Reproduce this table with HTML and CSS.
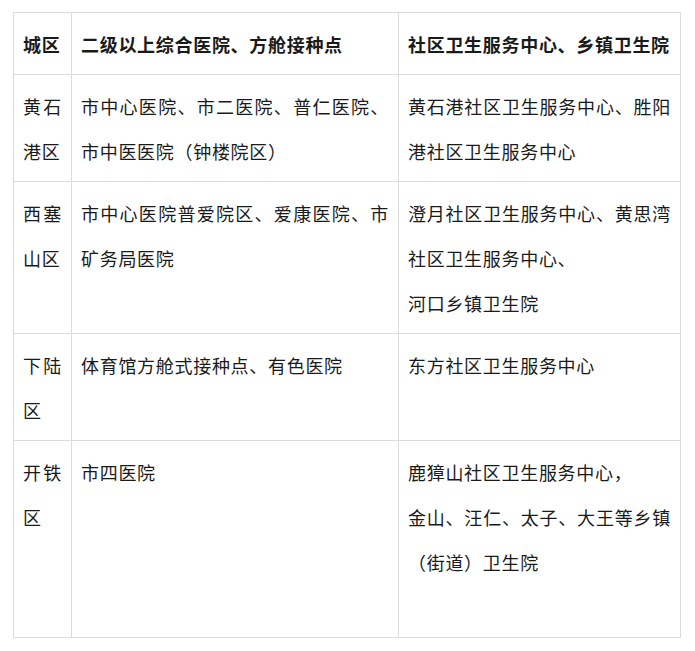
FILE: index.html
```html
<!DOCTYPE html>
<html lang="zh-CN">
<head>
<meta charset="utf-8">
<link rel="stylesheet" href="styles.css">
</head>
<body>
<table class="sites">
  <colgroup>
    <col class="c1">
    <col class="c2">
    <col class="c3">
  </colgroup>
  <tr class="head">
    <th>城区</th>
    <th>二级以上综合医院、方舱接种点</th>
    <th>社区卫生服务中心、乡镇卫生院</th>
  </tr>
  <tr>
    <td>黄石港区</td>
    <td>市中心医院、市二医院、普仁医院、市中医医院（钟楼院区）</td>
    <td>黄石港社区卫生服务中心、胜阳港社区卫生服务中心</td>
  </tr>
  <tr>
    <td>西塞山区</td>
    <td>市中心医院普爱院区、爱康医院、市矿务局医院</td>
    <td>澄月社区卫生服务中心、黄思湾社区卫生服务中心、<br>河口乡镇卫生院</td>
  </tr>
  <tr>
    <td>下陆区</td>
    <td>体育馆方舱式接种点、有色医院</td>
    <td>东方社区卫生服务中心</td>
  </tr>
  <tr>
    <td>开铁区</td>
    <td>市四医院</td>
    <td>鹿獐山社区卫生服务中心，<br>金山、汪仁、太子、大王等乡镇（街道）卫生院<br>&nbsp;</td>
  </tr>
</table>
</body>
</html>
```

FILE: styles.css
```css
html, body {
  background: #ffffff;
}
body {
  margin: 12px 0 0 13px;
  font-family: "Noto Sans CJK SC", "Noto Sans", sans-serif;
  color: #1a1a1a;
}
.sites {
  border-collapse: collapse;
  table-layout: fixed;
  width: 667px;
}
.c1 { width: 58px; }
.c2 { width: 327px; }
.c3 { width: 282px; }
.sites th,
.sites td {
  border: 1px solid #dcdcdc;
  padding: 9px 9px 7px 9px;
  font-size: 18px;
  line-height: 45px;
  letter-spacing: 0.7px;
  text-align: justify;
  vertical-align: top;
  word-break: break-all;
}
.sites th {
  font-weight: 700;
}
```
